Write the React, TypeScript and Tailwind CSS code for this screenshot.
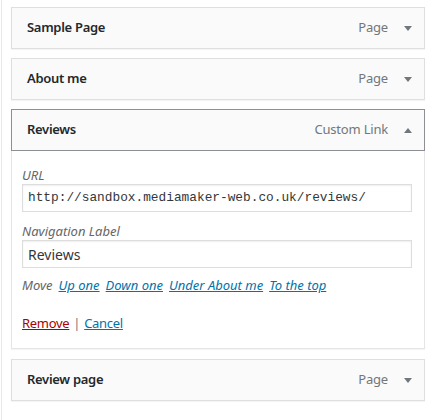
import React from "react";

const font = { fontFamily: '"Noto Sans", "Open Sans", sans-serif' };

function Arrow({ up }: { up?: boolean }) {
  return (
    <svg width="8" height="5" viewBox="0 0 8 5" className="ml-[16px] mr-[12px]">
      {up ? <polygon points="0,5 8,5 4,0" fill="#72777c" /> : <polygon points="0,0 8,0 4,5" fill="#72777c" />}
    </svg>
  );
}

function Bar({ title, type, open }: { title: string; type: string; open?: boolean }) {
  return (
    <div
      className={`flex h-[42px] w-[414px] items-center border bg-[#fafafa] pl-[15px] shadow-[0_1px_1px_rgba(0,0,0,0.04)] ${
        open ? "border-[#8c8f94]" : "border-[#dfdfdf]"
      }`}
    >
      <span className="flex-1 text-[13px] font-semibold tracking-[-0.3px] text-[#23282d]">{title}</span>
      <span className="text-[13px] tracking-[-0.2px] text-[#72777c]">{type}</span>
      <Arrow up={open} />
    </div>
  );
}

export default function App() {
  return (
    <div className="h-[420px] w-[445px] bg-white" style={font}>
      <div className="ml-[1px] h-full border-l border-[#e8e8e8] pl-[9px] pt-[7px]">
        <div className="flex flex-col gap-[9px]">
          <Bar title="Sample Page" type="Page" />
          <Bar title="About me" type="Page" />
          <div>
            <Bar title="Reviews" type="Custom Link" open />
            <div className="h-[198px] w-[414px] border border-t-0 border-[#e5e5e5] bg-white px-[10px] pt-[15px] shadow-[0_1px_1px_rgba(0,0,0,0.04)]">
              <div className="h-[18px] text-[13px] leading-[18px] italic text-[#666]">URL</div>
              <div className="flex h-[28px] w-[390px] items-center border border-[#ddd] bg-white px-[5px] text-[12.8px] text-[#32373c] shadow-[inset_0_1px_2px_rgba(0,0,0,0.07)]" style={{ fontFamily: '"Liberation Mono", monospace' }}>
                http://sandbox.mediamaker-web.co.uk/reviews/
              </div>
              <div className="mt-[10px] h-[18px] text-[13px] leading-[18px] italic text-[#666]">Navigation Label</div>
              <div className="flex h-[28px] w-[390px] items-center border border-[#ddd] bg-white px-[5px] text-[14px] text-[#32373c] shadow-[inset_0_1px_2px_rgba(0,0,0,0.07)]">
                Reviews
              </div>
              <div className="mt-[8px] flex gap-[6px] text-[13px] leading-[18px] italic">
                <span className="text-[#666]">Move</span>
                <a className="text-[#0073aa] underline">Up one</a>
                <a className="text-[#0073aa] underline">Down one</a>
                <a className="text-[#0073aa] underline">Under About me</a>
                <a className="text-[#0073aa] underline">To the top</a>
              </div>
              <div className="mt-[20px] flex text-[13px] leading-[18px] tracking-[-0.3px]">
                <a className="text-[#a00] underline">Remove</a>
                <span className="mx-[4px] text-[#72777c]">|</span>
                <a className="text-[#0073aa] underline">Cancel</a>
              </div>
            </div>
          </div>
          <div className="mt-[1px]">
            <Bar title="Review page" type="Page" />
          </div>
        </div>
      </div>
    </div>
  );
}
